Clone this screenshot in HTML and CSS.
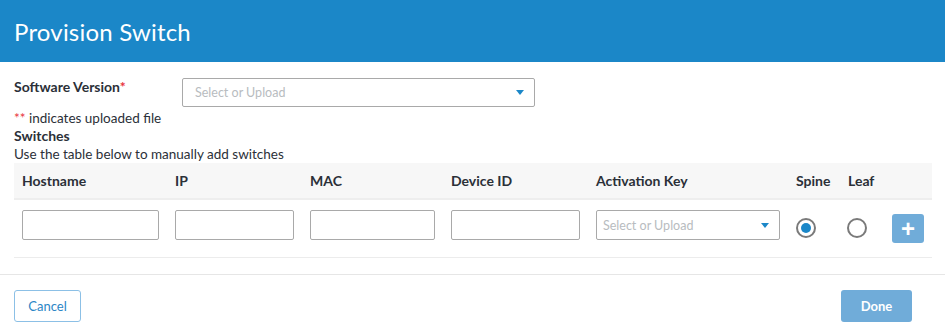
FILE: index.html
```html
<!DOCTYPE html>
<html lang="en">
<head>
    <meta charset="UTF-8">
    <meta name="viewport" content="width=device-width, initial-scale=1.0">
    <title>Provision Switch</title>
    <link rel="stylesheet" href="styles.css">
</head>
<body>
    <div class="modal">
        <div class="modal-header">
            <h2>Provision Switch</h2>
        </div>

        <div class="modal-body">
            <div class="field-row">
                <label class="field-label">Software Version<span class="req">*</span></label>
                <div class="select wide">
                    <span class="placeholder">Select or Upload</span>
                    <span class="caret"></span>
                </div>
            </div>
            <p class="note"><span class="req">**</span> indicates uploaded file</p>
            <p class="section-title">Switches</p>
            <p class="hint">Use the table below to manually add switches</p>

            <div class="switch-table">
                <div class="table-head">
                    <div class="th">Hostname</div>
                    <div class="th">IP</div>
                    <div class="th">MAC</div>
                    <div class="th">Device ID</div>
                    <div class="th">Activation Key</div>
                    <div class="th">Spine</div>
                    <div class="th">Leaf</div>
                    <div class="th"></div>
                </div>
                <div class="table-row">
                    <div class="td"><input type="text" class="text-input"></div>
                    <div class="td"><input type="text" class="text-input"></div>
                    <div class="td"><input type="text" class="text-input"></div>
                    <div class="td"><input type="text" class="text-input"></div>
                    <div class="td">
                        <div class="select">
                            <span class="placeholder">Select or Upload</span>
                            <span class="caret"></span>
                        </div>
                    </div>
                    <div class="td"><span class="radio checked"></span></div>
                    <div class="td"><span class="radio"></span></div>
                    <div class="td"><button type="button" class="add-btn">+</button></div>
                </div>
            </div>
        </div>

        <div class="modal-footer">
            <button type="button" class="btn btn-outline">Cancel</button>
            <button type="button" class="btn btn-primary">Done</button>
        </div>
    </div>
</body>
</html>
```

FILE: styles.css
```css
body {
    margin: 0;
    font-family: Lato, "Noto Sans", Arial, sans-serif;
    color: #2b3038;
    background: #fff;
}
.modal {
    width: 945px;
}
.modal-header {
    background: #1b87c8;
    height: 62px;
    padding: 0 14px;
    display: flex;
    align-items: center;
}
.modal-header h2 {
    margin: 0;
    color: #fff;
    font-size: 24px;
    font-weight: 400;
    letter-spacing: 0.2px;
}
.modal-body {
    padding: 16px 13px 16px 14px;
    border-bottom: 1px solid #e6e6e6;
}
.field-row {
    display: flex;
    align-items: flex-start;
}
.field-label {
    width: 168px;
    font-size: 14px;
    font-weight: 700;
    line-height: 18px;
}
.req {
    color: #e8323c;
}
.select {
    box-sizing: border-box;
    width: 100%;
    height: 30px;
    border: 1px solid #a9a9a9;
    border-radius: 2px;
    display: flex;
    align-items: center;
    justify-content: space-between;
    padding: 0 10px 0 6px;
    background: #fff;
}
.select.wide {
    width: 353px;
    height: 29px;
    padding-left: 12px;
}
.placeholder {
    color: #b8bcc0;
    font-size: 12.5px;
}
.caret {
    width: 0;
    height: 0;
    border-left: 4px solid transparent;
    border-right: 4px solid transparent;
    border-top: 5px solid #1b87c8;
}
.note, .hint {
    margin: 0;
    font-size: 13.5px;
    line-height: 18px;
}
.note {
    margin-top: 2px;
}
.section-title {
    margin: 0;
    font-size: 14px;
    font-weight: 700;
    line-height: 18px;
}
.switch-table {
    width: 918px;
}
.table-head, .table-row {
    display: grid;
    grid-template-columns: 153px 135px 141px 145px 200px 52px 44px 48px;
}
.table-head {
    background: #f7f7f7;
    height: 35px;
    align-items: center;
    border-bottom: 2px solid #eeeeee;
}
.th {
    padding: 0 8px;
    font-size: 14px;
    font-weight: 700;
}
.table-row {
    padding: 10px 0 14px;
    border-bottom: 1px solid #ececec;
    align-items: start;
}
.td {
    padding: 0 8px;
    display: flex;
    align-items: center;
}
.td:nth-child(7) {
    padding-left: 7px;
}
.text-input {
    box-sizing: border-box;
    width: 100%;
    height: 30px;
    border: 1px solid #a9a9a9;
    border-radius: 2px;
    margin: 0;
}
.radio {
    box-sizing: border-box;
    width: 20px;
    height: 20px;
    border: 2px solid #7a7a7a;
    border-radius: 50%;
    margin-top: 8px;
    display: flex;
    align-items: center;
    justify-content: center;
}
.radio.checked::after {
    content: "";
    width: 10px;
    height: 10px;
    border-radius: 50%;
    background: #1b87c8;
}
.add-btn {
    width: 32px;
    height: 29px;
    margin-top: 4px;
    border: none;
    border-radius: 3px;
    background: #70acd9;
    color: #fff;
    font-size: 24px;
    font-weight: 700;
    line-height: 29px;
    padding: 0;
    font-family: Arial, sans-serif;
}
.modal-footer {
    display: flex;
    justify-content: space-between;
    padding: 15px 33px 0 14px;
}
.btn {
    height: 32px;
    border-radius: 3px;
    font-family: Lato, "Noto Sans", Arial, sans-serif;
    font-size: 13px;
    padding: 0;
}
.btn-outline {
    width: 67px;
    background: #fff;
    border: 1px solid #8cc0e6;
    color: #2b86c6;
}
.btn-primary {
    width: 71px;
    background: #70acd9;
    border: none;
    color: #fff;
    font-weight: 700;
}
```
